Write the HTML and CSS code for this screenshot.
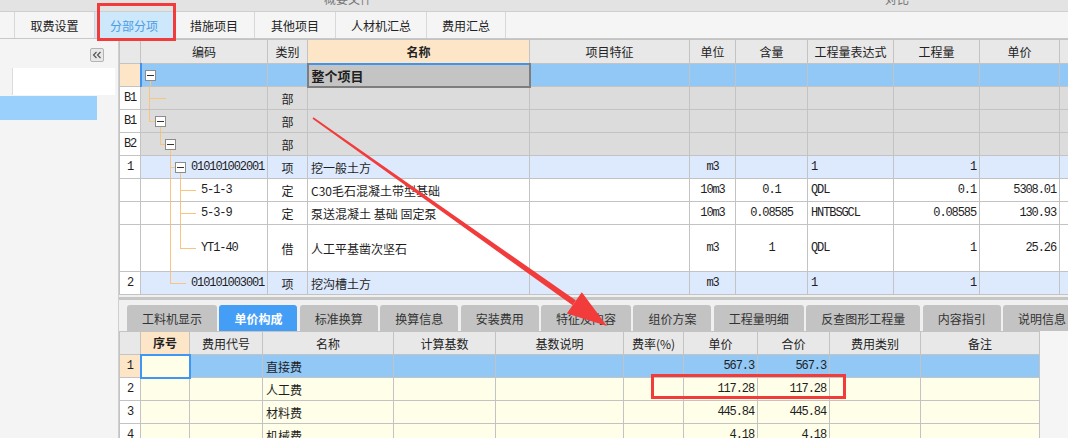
FILE: index.html
```html
<!DOCTYPE html>
<html lang="zh">
<head>
<meta charset="utf-8">
<title>分部分项</title>
<link rel="stylesheet" href="styles.css">
</head>
<body>
<div class="topbar"><span class="ghost g1">概要文件</span><span class="ghost g2">对比</span></div>
<div class="tabbar">
  <div class="tab w80">取费设置</div>
  <div class="tab w79 active">分部分项</div>
  <div class="tab w81">措施项目</div>
  <div class="tab w81">其他项目</div>
  <div class="tab w91">人材机汇总</div>
  <div class="tab w80 last">费用汇总</div>
</div>
<div class="main">
  <aside class="left">
    <div class="collapse-row">
      <div class="collapse"><svg width="12" height="12" viewBox="0 0 12 12"><polyline points="5.5,3 2.5,6 5.5,9" fill="none" stroke="#555" stroke-width="1.2"/><polyline points="9.5,3 6.5,6 9.5,9" fill="none" stroke="#555" stroke-width="1.2"/></svg></div>
    </div>
    <div class="left-input"></div>
    <div class="left-sel"></div>
  </aside>
  <section class="work">
    <div class="grid-wrap">
      <table class="grid">
        <colgroup>
          <col class="c21"><col class="c127"><col class="c40"><col class="c222"><col class="c160"><col class="c46"><col class="c72"><col class="c86"><col class="c86"><col class="c80"><col class="c40">
        </colgroup>
        <thead>
          <tr><th></th><th>编码</th><th>类别</th><th class="hl">名称</th><th>项目特征</th><th>单位</th><th>含量</th><th>工程量表达式</th><th>工程量</th><th>单价</th><th></th></tr>
        </thead>
        <tbody>
          <tr class="sel">
            <td class="rn orange"></td>
            <td class="code codesel"><div class="tree t0"><span class="box m3"></span></div></td>
            <td></td>
            <td class="selcell">整个项目</td>
            <td></td><td></td><td></td><td></td><td></td><td></td><td></td>
          </tr>
          <tr class="gray">
            <td class="rn num">B1</td>
            <td class="code"><div class="tree t1"></div></td>
            <td class="ctr">部</td>
            <td></td><td></td><td></td><td></td><td></td><td></td><td></td><td></td>
          </tr>
          <tr class="gray">
            <td class="rn num">B1</td>
            <td class="code"><div class="tree t2"><span class="box m14"></span></div></td>
            <td class="ctr">部</td>
            <td></td><td></td><td></td><td></td><td></td><td></td><td></td><td></td>
          </tr>
          <tr class="gray">
            <td class="rn num">B2</td>
            <td class="code"><div class="tree t3"><span class="box m24"></span></div></td>
            <td class="ctr">部</td>
            <td></td><td></td><td></td><td></td><td></td><td></td><td></td><td></td>
          </tr>
          <tr class="lb">
            <td class="rn num">1</td>
            <td class="code"><div class="tree t4"><span class="box m34"></span><span class="num codetxt">010101002001</span></div></td>
            <td class="ctr">项</td>
            <td>挖一般土方</td>
            <td></td>
            <td class="ctr num">m3</td>
            <td></td>
            <td class="num">1</td>
            <td class="rt num">1</td>
            <td></td><td></td>
          </tr>
          <tr class="wh">
            <td class="rn"></td>
            <td class="code"><div class="tree t5"><span class="num">5-1-3</span></div></td>
            <td class="ctr">定</td>
            <td>C30毛石混凝土带型基础</td>
            <td></td>
            <td class="ctr num">10m3</td>
            <td class="ctr num">0.1</td>
            <td class="num">QDL</td>
            <td class="rt num">0.1</td>
            <td class="rt num">5308.01</td>
            <td></td>
          </tr>
          <tr class="wh">
            <td class="rn"></td>
            <td class="code"><div class="tree t5"><span class="num">5-3-9</span></div></td>
            <td class="ctr">定</td>
            <td>泵送混凝土 基础 固定泵</td>
            <td></td>
            <td class="ctr num">10m3</td>
            <td class="ctr num">0.08585</td>
            <td class="num">HNTBSGCL</td>
            <td class="rt num">0.08585</td>
            <td class="rt num">130.93</td>
            <td></td>
          </tr>
          <tr class="wh tall">
            <td class="rn"></td>
            <td class="code"><div class="tree t7"><span class="num">YT1-40</span></div></td>
            <td class="ctr">借</td>
            <td>人工平基凿次坚石</td>
            <td></td>
            <td class="ctr num">m3</td>
            <td class="ctr num">1</td>
            <td class="num">QDL</td>
            <td class="rt num">1</td>
            <td class="rt num">25.26</td>
            <td></td>
          </tr>
          <tr class="lb">
            <td class="rn num">2</td>
            <td class="code"><div class="tree t8"><span class="num">010101003001</span></div></td>
            <td class="ctr">项</td>
            <td>挖沟槽土方</td>
            <td></td>
            <td class="ctr num">m3</td>
            <td></td>
            <td class="num">1</td>
            <td class="rt num">1</td>
            <td></td><td></td>
          </tr>
        </tbody>
      </table>
    </div>
    <div class="splitter"></div>
    <div class="subtabs">
      <div class="stab">工料机显示</div>
      <div class="stab active">单价构成</div>
      <div class="stab">标准换算</div>
      <div class="stab">换算信息</div>
      <div class="stab">安装费用</div>
      <div class="stab">特征及内容</div>
      <div class="stab">组价方案</div>
      <div class="stab">工程量明细</div>
      <div class="stab">反查图形工程量</div>
      <div class="stab">内容指引</div>
      <div class="stab">说明信息</div>
    </div>
    <div class="table-wrap">
      <table class="fee">
        <colgroup>
          <col class="c21"><col class="c49"><col class="c73"><col class="c131"><col class="c102"><col class="c128"><col class="c60"><col class="c74"><col class="c72"><col class="c91"><col class="c119">
        </colgroup>
        <thead>
          <tr><th></th><th class="hl">序号</th><th>费用代号</th><th>名称</th><th>计算基数</th><th>基数说明</th><th>费率(%)</th><th>单价</th><th>合价</th><th>费用类别</th><th>备注</th></tr>
        </thead>
        <tbody>
          <tr class="sel">
            <td class="rn orange bold num">1</td>
            <td class="focus"></td>
            <td></td>
            <td>直接费</td>
            <td></td><td></td><td></td>
            <td class="rt num">567.3</td>
            <td class="rt num">567.3</td>
            <td></td><td></td>
          </tr>
          <tr>
            <td class="rn num">2</td>
            <td></td><td></td>
            <td>人工费</td>
            <td></td><td></td><td></td>
            <td class="rt num">117.28</td>
            <td class="rt num">117.28</td>
            <td></td><td></td>
          </tr>
          <tr>
            <td class="rn num">3</td>
            <td></td><td></td>
            <td>材料费</td>
            <td></td><td></td><td></td>
            <td class="rt num">445.84</td>
            <td class="rt num">445.84</td>
            <td></td><td></td>
          </tr>
          <tr>
            <td class="rn num">4</td>
            <td></td><td></td>
            <td>机械费</td>
            <td></td><td></td><td></td>
            <td class="rt num">4.18</td>
            <td class="rt num">4.18</td>
            <td></td><td></td>
          </tr>
        </tbody>
      </table>
    </div>
  </section>
</div>
<svg class="annot" width="1068" height="438" viewBox="0 0 1068 438">
  <rect x="98.5" y="4.5" width="76" height="35" fill="none" stroke="#f23b3b" stroke-width="3"/>
  <rect x="652.5" y="375.5" width="192" height="22" fill="none" stroke="#f23b3b" stroke-width="3"/>
  <polygon points="312.5,118.7 313.5,117.3 576,300.5 572.6,305.3" fill="#f23b3b"/>
  <polygon points="566.8,313.5 581.8,292.3 607,326" fill="#f23b3b"/>
</svg>
</body>
</html>
```
FILE: styles.css
```css
* { box-sizing: border-box; }
body {
  margin: 0;
  width: 1068px;
  height: 438px;
  overflow: hidden;
  position: relative;
  font-family: "Noto Sans CJK SC", "Noto Sans", sans-serif;
  font-size: 12px;
  color: #1e1e1e;
  background: #f4f4f4;
}
.topbar {
  height: 12px;
  border-bottom: 1px solid #cfcfcf;
  background: #e3e3e3;
  display: flex;
  overflow: hidden;
}
.ghost {
  font-size: 12px;
  line-height: 12px;
  margin-top: -7px;
  color: #7a7a7a;
}
.g1 { margin-left: 324px; }
.g2 { margin-left: 513px; }

.tabbar {
  height: 27px;
  border-bottom: 1px solid #c8c8c8;
  background: #f5f5f5;
  display: flex;
  padding-left: 14px;
}
.tab {
  display: flex;
  align-items: center;
  justify-content: center;
  border-left: 1px solid #d8d8d8;
  color: #222;
  font-size: 12px;
}
.tab.last { border-right: 1px solid #d8d8d8; }
.tab.active { background: #cde7fb; color: #4a9de6; }
.w79 { width: 79px; }
.w80 { width: 80px; }
.w81 { width: 81px; }
.w91 { width: 91px; }

.main {
  display: flex;
  height: 399px;
}
.left {
  width: 119px;
  flex: none;
  border-right: 1px solid #cfcfcf;
  background: #f4f4f4;
}
.collapse-row {
  height: 29px;
  display: flex;
  justify-content: flex-end;
  padding: 9px 14px 0 0;
}
.collapse {
  width: 14px;
  height: 14px;
  border: 1px solid #b4b4b4;
  border-radius: 2px;
  background: #e8e8e8;
  display: flex;
  align-items: center;
  justify-content: center;
}
.left-input {
  height: 27px;
  margin-left: 12px;
  margin-right: 3px;
  background: #fff;
  border-left: 1px solid #dcdcdc;
}
.left-sel {
  height: 24px;
  width: 97px;
  margin-top: 1px;
  background: #99d1fc;
}

.work {
  flex: 1;
  min-width: 0;
  display: flex;
  flex-direction: column;
  overflow: hidden;
  background: #f0f0f0;
}
.grid-wrap { overflow: hidden; flex: none; background: #fff; }

.grid, .fee {
  border-collapse: collapse;
  table-layout: fixed;
}
.grid { width: 980px; }
.fee { width: 920px; }
.c21 { width: 21px; }
.c40 { width: 40px; }
.c46 { width: 46px; }
.c49 { width: 49px; }
.c60 { width: 60px; }
.c72 { width: 72px; }
.c73 { width: 73px; }
.c74 { width: 74px; }
.c80 { width: 80px; }
.c86 { width: 86px; }
.c91 { width: 91px; }
.c102 { width: 102px; }
.c119 { width: 119px; }
.c127 { width: 127px; }
.c128 { width: 128px; }
.c131 { width: 131px; }
.c160 { width: 160px; }
.c222 { width: 222px; }

.grid th, .grid td, .fee th, .fee td {
  border: 1px solid #c3c3c3;
  padding: 0 3px;
  height: 23px;
  white-space: nowrap;
  overflow: hidden;
  font-weight: normal;
  text-align: left;
}
.grid th, .fee th {
  background: #e8e8e8;
  text-align: center;
  color: #222;
  height: 24px;
}
.fee th { height: 23px; }
th.hl { background: #fde6c8; font-weight: bold; }

.num {
  font-family: "Liberation Mono", "DejaVu Sans Mono", monospace;
  font-size: 12px;
  letter-spacing: -1.1px;
}
.ctr { text-align: center !important; }
.rt { text-align: right !important; }
.bold { font-weight: bold; }

.grid td.rn, .fee td.rn { text-align: center; background: #fff; padding: 0; }
td.rn.orange { background: #fde6c8 !important; }

.grid tr.sel td { background: #92c8f6; }
.grid tr.gray td { background: #dcdcdc; }
.grid tr.lb td { background: #dde9fc; }
.grid tr.wh td { background: #fff; }
.grid tr.tall td { height: 47px; }
.grid tr.gray td.rn, .grid tr.lb td.rn { background: #fff; }

td.codesel { border-left: 2px solid #3d95f0 !important; }
.grid tr.sel td.selcell {
  background: #c4c4c4;
  border: 2px solid #7e7e7e;
  border-top: 2px solid #3e95ef;
  font-weight: bold;
  font-size: 13px;
}

.grid td.code { padding: 0; }
.tree {
  height: 22px;
  display: flex;
  align-items: center;
  --ln: #f9c47f;
}
.tall .tree { height: 46px; }
.box {
  width: 11px;
  height: 11px;
  border: 1px solid #8c8c8c;
  background: #fff;
  display: flex;
  align-items: center;
  justify-content: center;
  flex: none;
}
.box::after {
  content: "";
  width: 7px;
  height: 1px;
  background: #333;
}
.m3 { margin-left: 3px; }
.m14 { margin-left: 14px; }
.m24 { margin-left: 24px; }
.m34 { margin-left: 34px; }
.codetxt { margin-left: 5px; }

.t0 {
  background: linear-gradient(var(--ln), var(--ln)) 8px 16px / 1px 100% no-repeat;
}
.t1 {
  background:
    linear-gradient(var(--ln), var(--ln)) 8px 0 / 1px 100% no-repeat,
    linear-gradient(var(--ln), var(--ln)) 8px 11px / 17px 1px no-repeat;
}
.t2 {
  background:
    linear-gradient(var(--ln), var(--ln)) 8px 0 / 1px 11px no-repeat,
    linear-gradient(var(--ln), var(--ln)) 8px 11px / 6px 1px no-repeat,
    linear-gradient(var(--ln), var(--ln)) 19px 16px / 1px 100% no-repeat;
}
.t3 {
  background:
    linear-gradient(var(--ln), var(--ln)) 19px 0 / 1px 11px no-repeat,
    linear-gradient(var(--ln), var(--ln)) 19px 11px / 5px 1px no-repeat,
    linear-gradient(var(--ln), var(--ln)) 29px 16px / 1px 100% no-repeat;
}
.t4 {
  background:
    linear-gradient(var(--ln), var(--ln)) 29px 0 / 1px 100% no-repeat,
    linear-gradient(var(--ln), var(--ln)) 29px 11px / 5px 1px no-repeat,
    linear-gradient(var(--ln), var(--ln)) 39px 16px / 1px 100% no-repeat;
}
.t5 {
  padding-left: 60px;
  background:
    linear-gradient(var(--ln), var(--ln)) 29px 0 / 1px 100% no-repeat,
    linear-gradient(var(--ln), var(--ln)) 39px 0 / 1px 100% no-repeat,
    linear-gradient(var(--ln), var(--ln)) 39px 11px / 16px 1px no-repeat;
}
.t7 {
  padding-left: 60px;
  background:
    linear-gradient(var(--ln), var(--ln)) 29px 0 / 1px 100% no-repeat,
    linear-gradient(var(--ln), var(--ln)) 39px 0 / 1px 23px no-repeat,
    linear-gradient(var(--ln), var(--ln)) 39px 23px / 16px 1px no-repeat;
}
.t8 {
  padding-left: 50px;
  background:
    linear-gradient(var(--ln), var(--ln)) 29px 0 / 1px 11px no-repeat,
    linear-gradient(var(--ln), var(--ln)) 29px 11px / 16px 1px no-repeat;
}

.splitter {
  height: 3px;
  margin-top: 2px;
  background: #c6c6c6;
  flex: none;
}
.subtabs {
  display: flex;
  gap: 2.4px;
  padding: 5px 0 0 8px;
  flex: none;
}
.stab {
  height: 26px;
  padding: 0 15px;
  display: flex;
  align-items: center;
  background: #c3c3c3;
  border-radius: 3px 3px 0 0;
  color: #333;
  white-space: nowrap;
  flex: none;
}
.stab.active { background: #459ef6; color: #fff; font-weight: bold; }

.table-wrap {
  flex: 1;
  background: #f5f5f5;
  overflow: hidden;
}
.fee td { background: #fffee9; }
.fee tr.sel td { background: #92c8f6; }
.fee tr.sel td.focus {
  background: #fffee9;
  border: 2px solid #3f97f5;
}

.annot {
  position: absolute;
  left: 0;
  top: 0;
  pointer-events: none;
}
```
